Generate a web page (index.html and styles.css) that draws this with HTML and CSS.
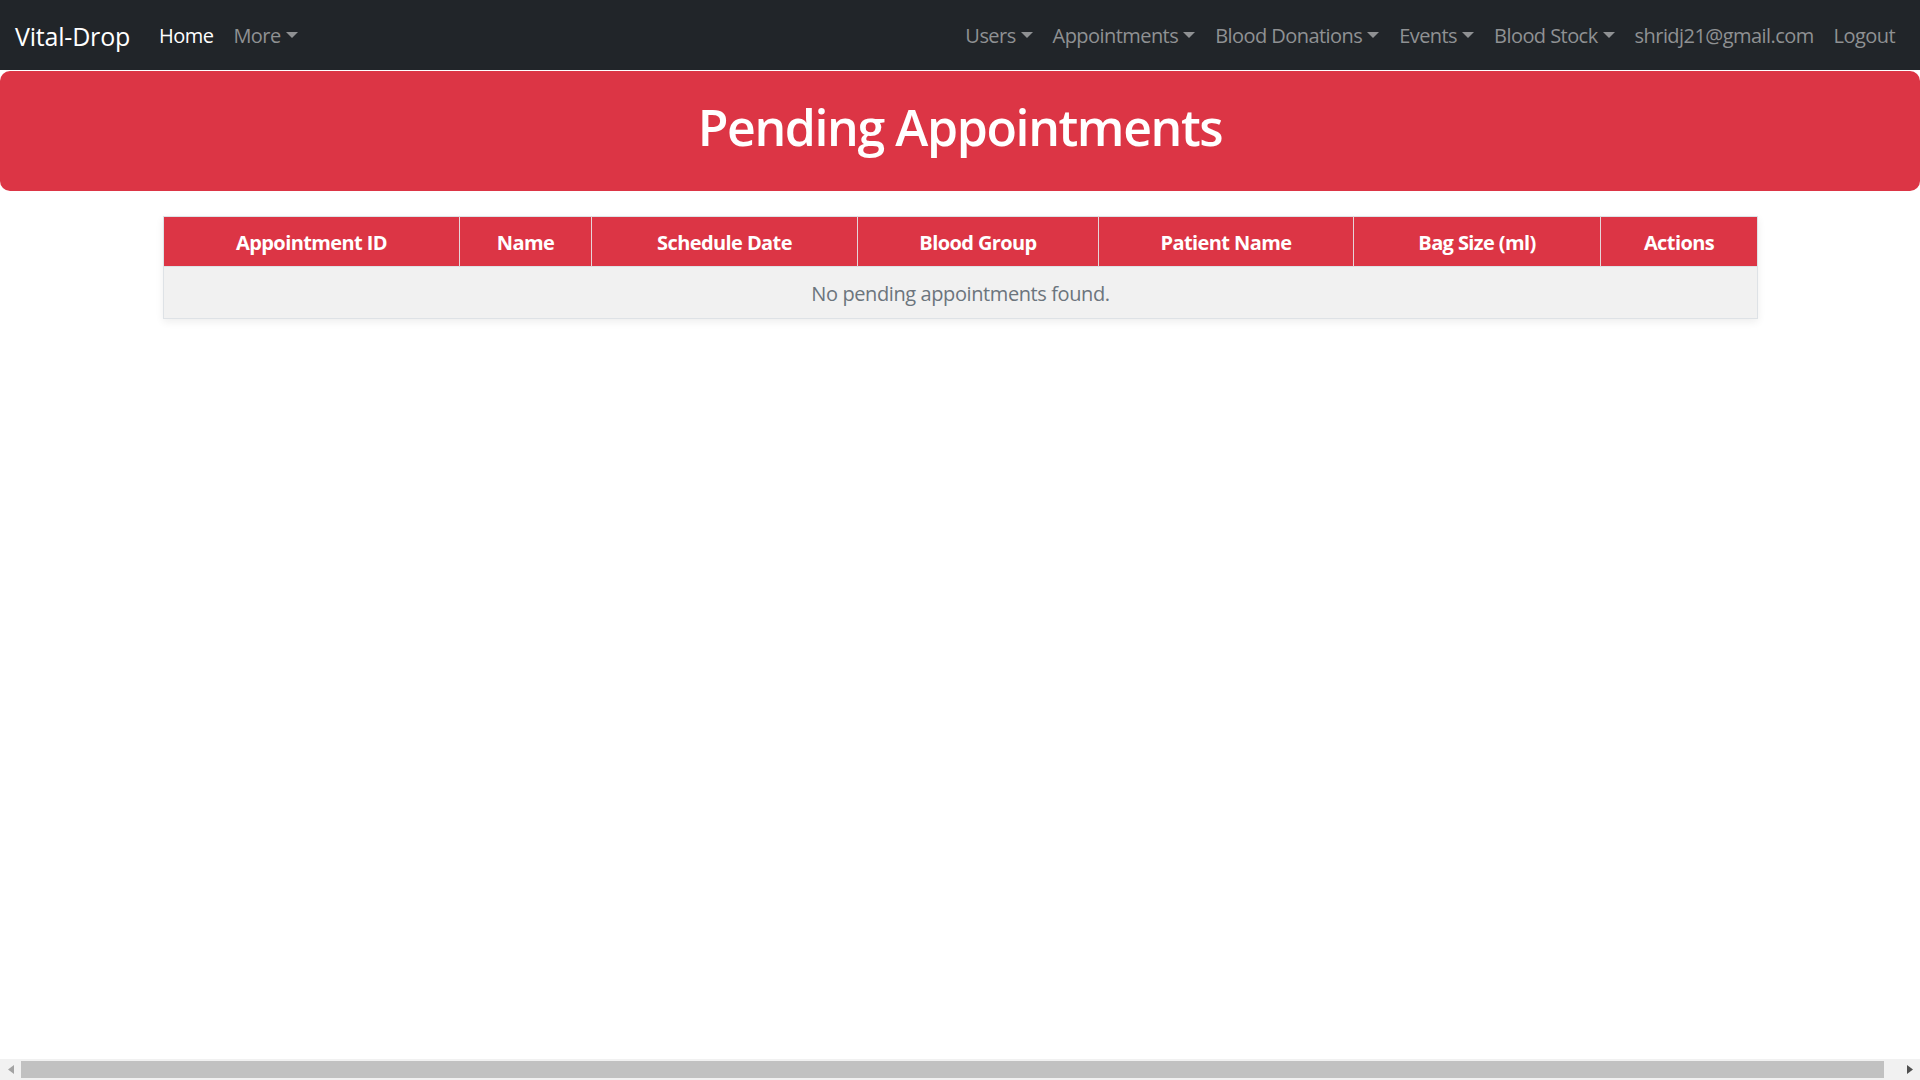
FILE: index.html
```html
<!DOCTYPE html>
<html lang="en">
<head>
<meta charset="utf-8">
<title>Pending Appointments - Vital-Drop</title>
<link rel="stylesheet" href="styles.css">
</head>
<body>
<nav class="navbar">
  <div class="nav-left">
    <a class="brand" href="#">Vital-Drop</a>
    <a class="nav-link active" href="#">Home</a>
    <a class="nav-link dropdown" href="#">More</a>
  </div>
  <div class="nav-right">
    <a class="nav-link dropdown" href="#">Users</a>
    <a class="nav-link dropdown" href="#">Appointments</a>
    <a class="nav-link dropdown" href="#">Blood Donations</a>
    <a class="nav-link dropdown" href="#">Events</a>
    <a class="nav-link dropdown" href="#">Blood Stock</a>
    <a class="nav-link" href="#">shridj21@gmail.com</a>
    <a class="nav-link" href="#">Logout</a>
  </div>
</nav>

<header class="banner">
  <h1 class="banner-title">Pending Appointments</h1>
</header>

<main class="content">
  <table class="appt-table">
    <colgroup>
      <col class="c1"><col class="c2"><col class="c3"><col class="c4"><col class="c5"><col class="c6"><col class="c7">
    </colgroup>
    <thead>
      <tr>
        <th>Appointment ID</th>
        <th>Name</th>
        <th>Schedule Date</th>
        <th>Blood Group</th>
        <th>Patient Name</th>
        <th>Bag Size (ml)</th>
        <th>Actions</th>
      </tr>
    </thead>
    <tbody>
      <tr>
        <td colspan="7" class="empty">No pending appointments found.</td>
      </tr>
    </tbody>
  </table>
</main>

<div class="hscroll">
  <div class="hs-btn">
    <svg width="6" height="9" viewBox="0 0 6 9"><polygon points="6,0 6,9 0,4.5" fill="#a3a3a3"/></svg>
  </div>
  <div class="hs-thumb"></div>
  <div class="hs-fill"></div>
  <div class="hs-btn">
    <svg width="6" height="9" viewBox="0 0 6 9"><polygon points="0,0 0,9 6,4.5" fill="#505050"/></svg>
  </div>
</div>
</body>
</html>
```
FILE: styles.css
```css
* { box-sizing: border-box; }

html, body {
  margin: 0;
  padding: 0;
  height: 100%;
  overflow: hidden;
}

body {
  font-family: "Open Sans", "Noto Sans", "Liberation Sans", sans-serif;
  font-size: 20px;
  line-height: 1.5;
  color: #212529;
  background: #fff;
}

a { text-decoration: none; }

.navbar {
  height: 70px;
  background: #212529;
  display: flex;
  align-items: center;
  justify-content: space-between;
  padding: 2px 15px 0;
}

.nav-left, .nav-right {
  display: flex;
  align-items: center;
}

.brand {
  color: #fff;
  font-size: 25px;
  line-height: 37px;
  margin-right: 19px;
  letter-spacing: -0.2px;
}

.nav-link {
  color: #8f9193;
  padding: 0 10px;
  line-height: 30px;
  letter-spacing: -0.56px;
  display: inline-flex;
  align-items: center;
}

.nav-link.active { color: #fff; }

.dropdown::after {
  content: "";
  display: inline-block;
  margin-left: 5px;
  border-top: 6px solid currentColor;
  border-left: 6px solid transparent;
  border-right: 6px solid transparent;
  transform: translateY(-1px);
}

.banner {
  margin-top: 1px;
  height: 120px;
  background: #dc3545;
  border-radius: 10px;
  display: flex;
  align-items: center;
  justify-content: center;
  padding-bottom: 8px;
}

.banner-title {
  margin: 0;
  color: #fff;
  font-size: 50px;
  font-weight: 600;
  line-height: 60px;
  letter-spacing: -1.4px;
}

.content {
  padding: 25px 163px 0;
}

.appt-table {
  width: 1594px;
  table-layout: fixed;
  border-collapse: collapse;
  border: 1px solid #dee2e6;
  box-shadow: 0 3px 8px rgba(0, 0, 0, 0.07);
}

.c1 { width: 296px; }
.c2 { width: 132px; }
.c3 { width: 266px; }
.c4 { width: 241px; }
.c5 { width: 255px; }
.c6 { width: 247px; }
.c7 { width: 157px; }

.appt-table th {
  background: #dc3545;
  color: #fff;
  font-weight: 700;
  height: 50px;
  padding: 2px 10px 0;
  text-align: center;
  border-right: 1px solid #e6d5d8;
  letter-spacing: -0.6px;
}

.appt-table th:last-child { border-right: none; }

.appt-table td.empty {
  background: #f1f1f1;
  color: #6c757d;
  text-align: center;
  height: 52px;
  padding: 3px 10px 0;
  border-top: 1px solid #dee2e6;
  letter-spacing: -0.4px;
}

.hscroll {
  position: fixed;
  left: 0;
  right: 0;
  bottom: 0;
  height: 21px;
  background: #f1f1f1;
  display: flex;
  align-items: center;
}

.hs-btn {
  width: 21px;
  height: 21px;
  display: flex;
  align-items: center;
  justify-content: center;
}

.hs-thumb {
  width: 1863px;
  height: 17px;
  background: #c1c1c1;
}

.hs-fill { flex: 1; }
```
